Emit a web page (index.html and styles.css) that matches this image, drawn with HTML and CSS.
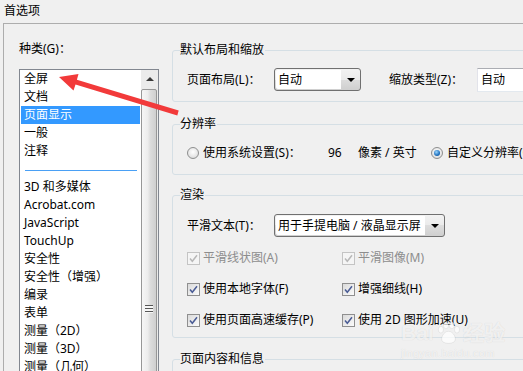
FILE: index.html
```html
<!DOCTYPE html>
<html lang="zh-CN">
<head>
    <meta charset="UTF-8">
    <title>首选项</title>
    <link rel="stylesheet" href="styles.css">
</head>
<body>
    <div class="window">
        <div class="titlebar">首选项</div>
        <div class="frame">
            <div class="sidebar">
                <div class="side-label">种类(G)：</div>
                <div class="listbox">
                    <ul class="cats">
                        <li>全屏</li>
                        <li>文档</li>
                        <li class="selected">页面显示</li>
                        <li>一般</li>
                        <li>注释</li>
                        <li class="sep"><span></span></li>
                        <li>3D 和多媒体</li>
                        <li>Acrobat.com</li>
                        <li>JavaScript</li>
                        <li>TouchUp</li>
                        <li>安全性</li>
                        <li>安全性（增强）</li>
                        <li>编录</li>
                        <li>表单</li>
                        <li>测量（2D）</li>
                        <li>测量（3D）</li>
                        <li>测量（几何）</li>
                        <li>跟踪器</li>
                    </ul>
                    <div class="vscroll">
                        <div class="scroll-btn"><span class="tri-up"></span></div>
                        <div class="thumb"><span class="grip"></span></div>
                    </div>
                </div>
            </div>

            <div class="settings">
                <fieldset class="group g1">
                    <legend>默认布局和缩放</legend>
                    <div class="group-body">
                        <div class="row">
                            <span class="lbl w87">页面布局(L)：</span>
                            <div class="select w87"><span class="select-value">自动</span><span class="select-arrow"></span></div>
                            <span class="lbl zoom-lbl">缩放类型(Z)：</span>
                            <div class="textbox">自动</div>
                        </div>
                    </div>
                </fieldset>

                <fieldset class="group g2">
                    <legend>分辨率</legend>
                    <div class="group-body">
                        <div class="row radio-row">
                            <span class="radio"></span>
                            <span class="lbl sys-lbl">使用系统设置(S)：</span>
                            <span class="lbl dpi">96</span>
                            <span class="lbl unit">像素 / 英寸</span>
                            <span class="radio on"></span>
                            <span class="lbl">自定义分辨率(C)：</span>
                        </div>
                    </div>
                </fieldset>

                <fieldset class="group g3">
                    <legend>渲染</legend>
                    <div class="group-body">
                        <div class="row">
                            <span class="lbl w87">平滑文本(T)：</span>
                            <div class="select w171"><span class="select-value">用于手提电脑 / 液晶显示屏</span><span class="select-arrow"></span></div>
                        </div>
                        <div class="options">
                            <div class="opt disabled"><span class="cb"><svg viewBox="0 0 11 11"><path d="M2 5.5 4.3 8.3 9 2.3"/></svg></span>平滑线状图(A)</div>
                            <div class="opt disabled"><span class="cb"><svg viewBox="0 0 11 11"><path d="M2 5.5 4.3 8.3 9 2.3"/></svg></span>平滑图像(M)</div>
                            <div class="opt"><span class="cb"><svg viewBox="0 0 11 11"><path d="M2 5.5 4.3 8.3 9 2.3"/></svg></span>使用本地字体(F)</div>
                            <div class="opt"><span class="cb"><svg viewBox="0 0 11 11"><path d="M2 5.5 4.3 8.3 9 2.3"/></svg></span>增强细线(H)</div>
                            <div class="opt"><span class="cb"><svg viewBox="0 0 11 11"><path d="M2 5.5 4.3 8.3 9 2.3"/></svg></span>使用页面高速缓存(P)</div>
                            <div class="opt"><span class="cb"><svg viewBox="0 0 11 11"><path d="M2 5.5 4.3 8.3 9 2.3"/></svg></span>使用 2D 图形加速(U)</div>
                        </div>
                    </div>
                </fieldset>

                <fieldset class="group g4">
                    <legend>页面内容和信息</legend>
                    <div class="group-body">
                        <div class="row"></div>
                    </div>
                </fieldset>
            </div>
        </div>

        <!-- 标注用的红色箭头 -->
        <svg class="arrow" viewBox="0 0 523 371">
            <polygon points="59,77 78.5,74 76.9,79.8 178.7,110.6 177.3,115.4 75.5,84.6 73.5,90.5"/>
        </svg>

        <div class="watermark">
            <div class="wm-logo">Bai<svg class="paw" viewBox="0 0 28 26"><ellipse cx="5" cy="9" rx="3" ry="4"/><ellipse cx="11" cy="4" rx="3" ry="4"/><ellipse cx="18" cy="4" rx="3" ry="4"/><ellipse cx="24" cy="9" rx="3" ry="4"/><path d="M14 11 C8 11 4 20 7 23 C10 26 18 26 21 23 C24 20 20 11 14 11 Z"/></svg>经验</div>
            <div class="wm-url">jingyan.baidu.com</div>
        </div>
    </div>
</body>
</html>
```

FILE: styles.css
```css
body{
    margin:0;
    background:#f0f0f0;
    font:12px/18px "Noto Sans","Noto Sans CJK SC",sans-serif;
    color:#000;
    overflow:hidden;
}
.window{
    position:relative;
    width:523px;
    height:371px;
    overflow:hidden;
}
.titlebar{
    height:23px;
    line-height:22px;
    padding-left:4px;
}
.frame{
    display:flex;
    align-items:flex-start;
    height:347px;
    margin-left:3px;
    border-top:1px solid #adadad;
    border-left:1px solid #adadad;
}

/* 左边的种类列表 */
.sidebar{
    flex:none;
    padding:16px 0 0 15px;
}
.side-label{
    height:18px;
    margin-bottom:11px;
}
.listbox{
    display:flex;
    width:138px;
    height:320px;
    border:1px solid #828790;
    background:#fff;
}
.cats{
    width:121px;
    margin:0;
    padding:0;
    list-style:none;
}
.cats li{
    height:18px;
    line-height:18px;
    margin:0 1px;
    padding-left:3px;
    white-space:nowrap;
}
.cats .selected{
    background:#3399ff;
    color:#fff;
}
.cats .sep{
    box-sizing:border-box;
    padding:10px 3px 0 4px;
}
.cats .sep span{
    display:block;
    height:1px;
    background:#4aa0f5;
}
.vscroll{
    width:17px;
    background:#ebebeb;
}
.scroll-btn{
    display:flex;
    justify-content:center;
    align-items:center;
    height:18px;
}
.tri-up{
    width:0;
    height:0;
    border:4px solid transparent;
    border-top:0;
    border-bottom:4px solid #3a3a3a;
}
.thumb{
    display:flex;
    justify-content:center;
    width:14px;
    height:436px;
    margin-top:1px;
    border:1px solid #979797;
    border-radius:2px;
    background:linear-gradient(to right,#f6f6f6,#ededed 40%,#dcdcdc 60%,#cfcfcf);
}
.grip{
    width:8px;
    height:8px;
    margin-top:215px;
    background:repeating-linear-gradient(#565656 0 1px,#f6f6f6 1px 3px);
}

/* 右边的设置分组 */
.settings{
    flex:none;
    width:380px;
    margin-left:13px;
}
.group{
    margin:0;
    min-width:0;
    padding:10px 0 10px 7px;
    border:1px solid #d5dfe5;
    border-radius:3px;
}
.group legend{
    padding:0 1px 0 0;
    line-height:16px;
}
.group-body{
    padding-left:7px;
}
.g1{ margin-top:18px; }
.g2{ margin-top:14px; padding-top:12px; padding-bottom:12px; }
.g3{ margin-top:12px; padding-top:11px; padding-bottom:8px; }
.g4{ margin-top:13px; }

.row{
    display:flex;
    align-items:center;
    height:23px;
    white-space:nowrap;
}
.radio-row{
    height:18px;
}
.lbl{
    flex:none;
}
.w87{ width:87px; }
.w171{ width:171px; }
.zoom-lbl{
    width:88px;
    margin-left:28px;
}
.sys-lbl{ width:125px; }
.dpi{ width:30px; }
.unit{ width:73px; }

.select{
    display:flex;
    flex:none;
    box-sizing:border-box;
    height:23px;
    border:1px solid #707070;
    border-radius:3px;
    background:linear-gradient(#f2f2f2,#ebebeb 50%,#dddddd 50%,#cfcfcf);
}
.select-value{
    flex:1;
    margin:1px 0 1px 1px;
    padding-left:2px;
    line-height:19px;
    background:#fff;
    border-radius:2px 0 0 2px;
    overflow:hidden;
}
.select-arrow{
    display:flex;
    align-items:center;
    justify-content:center;
    width:19px;
}
.select-arrow::before{
    content:"";
    border:4px solid transparent;
    border-bottom:0;
    border-top:4px solid #000;
}
.textbox{
    flex:none;
    box-sizing:border-box;
    width:100px;
    height:24px;
    padding-left:3px;
    line-height:22px;
    border:1px solid;
    border-color:#abadb3 #dbdfe6 #e3e9ef #e2e3ea;
    background:#fff;
}

.radio{
    display:flex;
    align-items:center;
    justify-content:center;
    flex:none;
    box-sizing:border-box;
    width:12px;
    height:12px;
    margin:0 4px 0 0;
    border:1px solid #8e8f8f;
    border-radius:50%;
    background:radial-gradient(circle at 50% 40%,#fff,#e4e4e4 65%,#cdcdcd);
}
.radio.on::after{
    content:"";
    width:6px;
    height:6px;
    border-radius:50%;
    background:radial-gradient(circle at 40% 35%,#9ad6ff,#1f70bd 60%,#0c4a86);
}

.options{
    display:grid;
    grid-template-columns:155px auto;
    row-gap:13px;
    margin-top:12px;
}
.opt{
    display:flex;
    align-items:center;
    height:18px;
    white-space:nowrap;
}
.cb{
    display:flex;
    align-items:center;
    justify-content:center;
    flex:none;
    box-sizing:border-box;
    width:13px;
    height:13px;
    margin-right:3px;
    border:1px solid #8f8f8f;
    background:linear-gradient(135deg,#dadada,#fbfbfb);
}
.cb svg{
    width:11px;
    height:11px;
}
.cb path{
    fill:none;
    stroke:#4a5c95;
    stroke-width:1.5;
}
.disabled{
    color:#8d8d8d;
}
.disabled .cb{
    border-color:#c4c4c4;
    background:#f5f5f5;
}
.disabled .cb path{
    stroke:#b8b8b8;
}

/* 覆盖在上面的标注 */
.arrow{
    position:absolute;
    left:0;
    top:0;
    width:523px;
    height:371px;
    pointer-events:none;
}
.arrow polygon{
    fill:#f23a3a;
}
.watermark{
    position:absolute;
    left:401px;
    top:322px;
    color:rgba(255,255,255,0.7);
    text-shadow:0 0 1px rgba(0,0,0,0.14);
    pointer-events:none;
}
.wm-logo{
    display:flex;
    align-items:center;
    font:bold 21px/22px "Liberation Sans",sans-serif;
}
.paw{
    width:27px;
    height:22px;
    margin:0 1px;
    fill:rgba(255,255,255,0.7);
    stroke:rgba(0,0,0,0.08);
}
.wm-url{
    font:11px/14px "Liberation Sans",sans-serif;
    letter-spacing:0.3px;
    margin-top:2px;
}
```
